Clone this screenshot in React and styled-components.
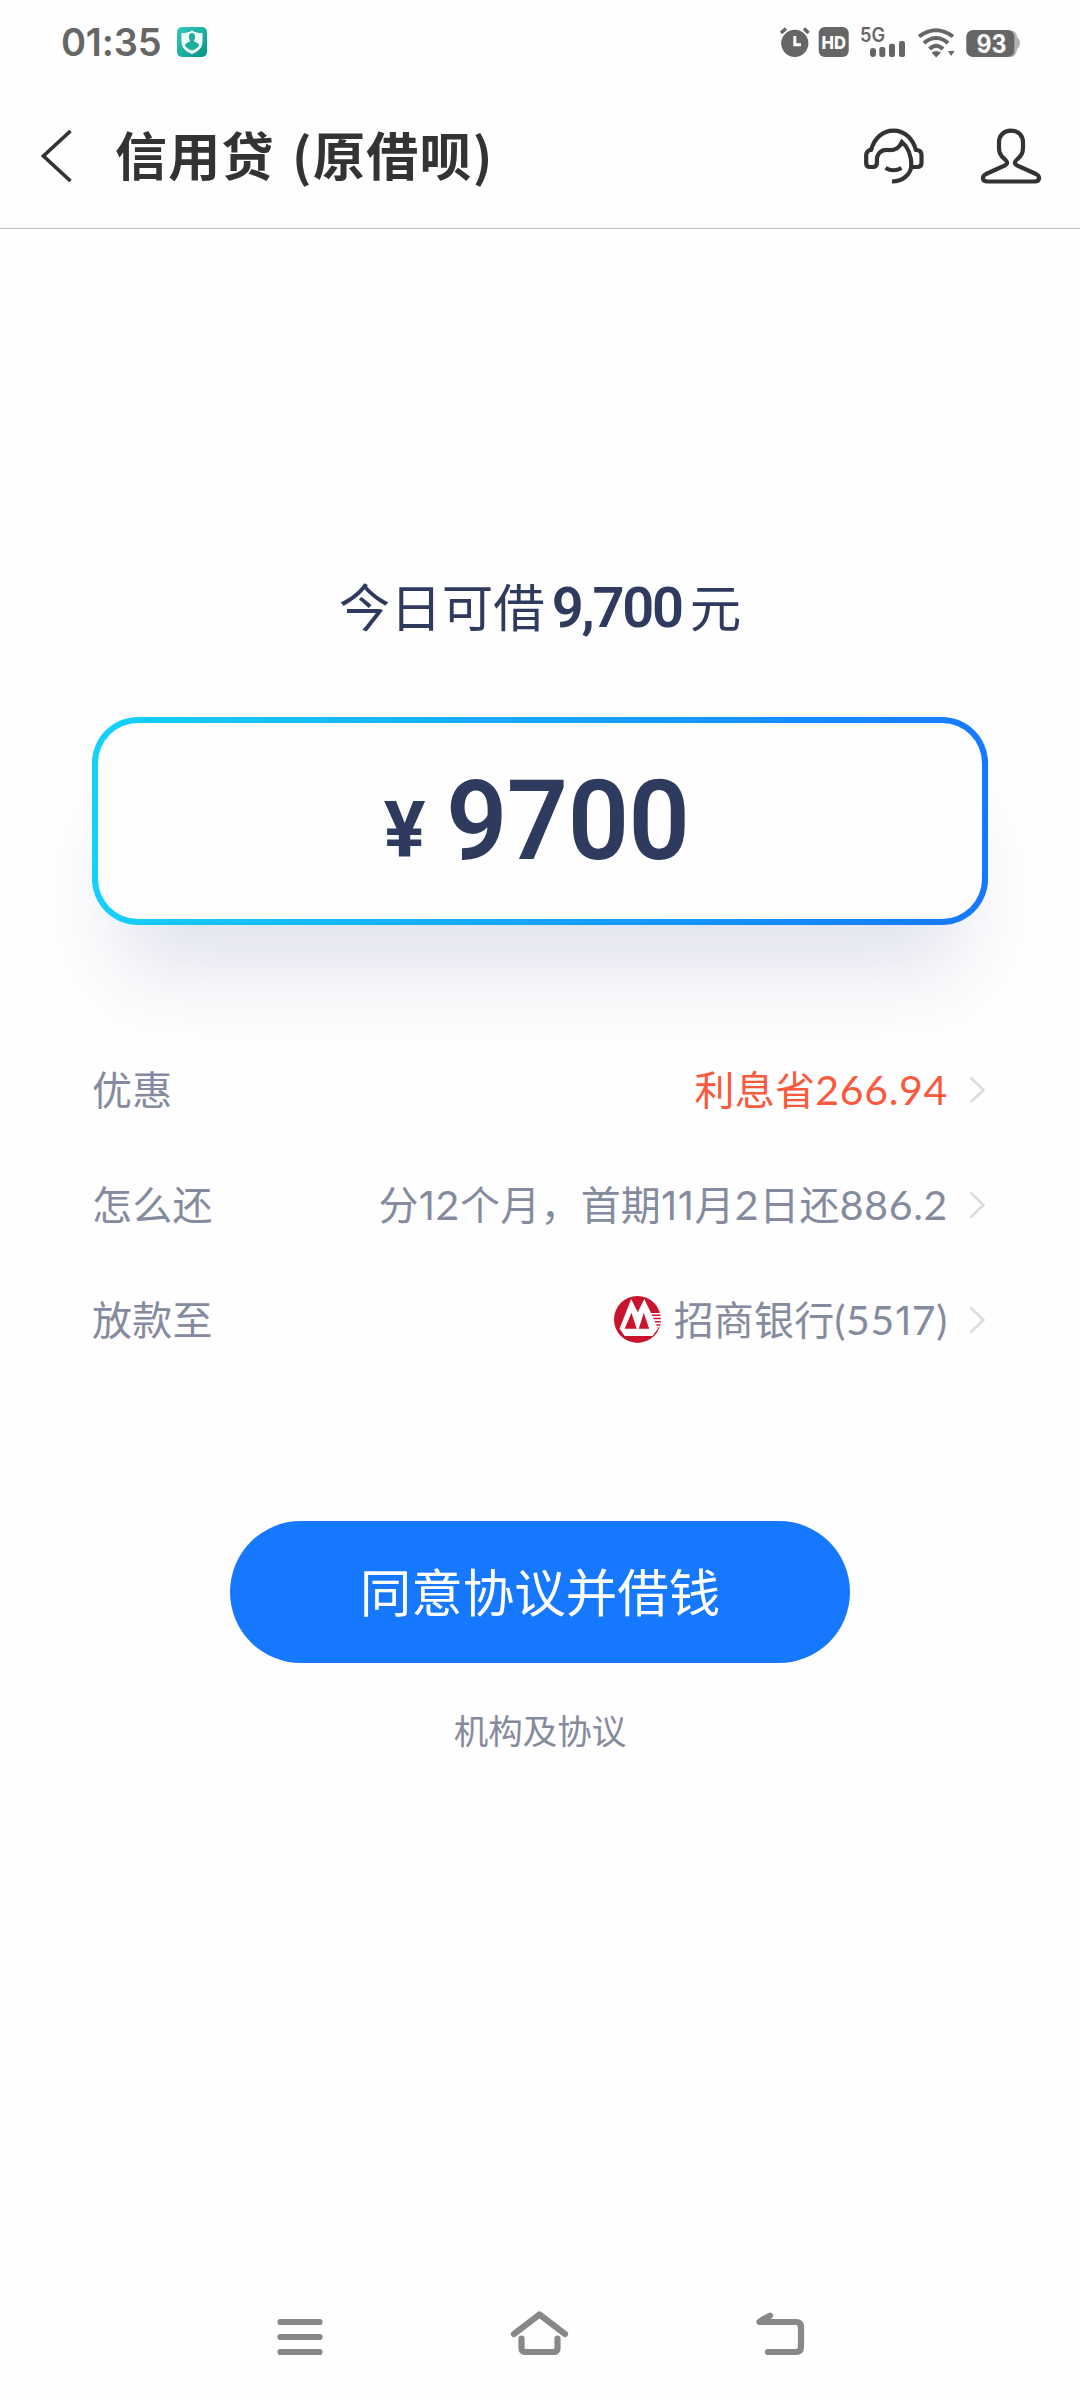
import styled, { createGlobalStyle } from "styled-components";

const rows = [
  {
    label: "优惠",
    accent: true,
    parts: [{ text: "利息省" }, { text: "266.94", num: true }],
  },
  {
    label: "怎么还",
    parts: [
      { text: "分" },
      { text: "1", num: true, narrow: true },
      { text: "2", num: true },
      { text: "个月，首期" },
      { text: "11", num: true, narrow: true },
      { text: "月" },
      { text: "2", num: true },
      { text: "日还" },
      { text: "886.2", num: true },
    ],
  },
  {
    label: "放款至",
    bank: true,
    parts: [
      { text: "招商银行" },
      { text: "(55", num: true },
      { text: "1", num: true, narrow: true },
      { text: "7)", num: true },
    ],
  },
];

export default function App() {
  return (
    <Page>
      <GlobalStyle />
      <StatusBar>
        <Clock>01:35</Clock>
        <ShieldIcon />
        <StatusIcons />
      </StatusBar>
      <Header>
        <BackIcon />
        <Title>信用贷 (原借呗)</Title>
        <HeadsetIcon />
        <PersonIcon />
      </Header>
      <Content>
        <Available>
          今日可借<strong>9,700</strong>元
        </Available>
        <AmountBox>
          <Currency>¥</Currency>
          <Amount>9700</Amount>
        </AmountBox>
        <List>
          {rows.map((row) => (
            <Row key={row.label}>
              <Label>{row.label}</Label>
              {row.bank && <BankLogo />}
              <Value $accent={row.accent}>
                {row.parts.map((part, i) =>
                  part.num ? (
                    <Num key={i} $narrow={part.narrow}>
                      {part.text}
                    </Num>
                  ) : (
                    <span key={i}>{part.text}</span>
                  )
                )}
              </Value>
              <ArrowIcon />
            </Row>
          ))}
        </List>
        <Submit>同意协议并借钱</Submit>
        <Agreement>机构及协议</Agreement>
      </Content>
      <NavBar>
        <svg width="46" height="44" viewBox="0 0 46 44">
          <path d="M3.5 7H42.5M3.5 22H42.5M3.5 37H42.5" />
        </svg>
        <svg width="60" height="44" viewBox="0 0 60 44">
          <path d="M5 19L30.500 -0.500L56 19M12.500 23.500V33Q12.500 37 16.500 37H44.500Q48.500 37 48.500 33V23.500" />
        </svg>
        <svg width="50" height="44" viewBox="0 0 50 44">
          <path d="M15 0.7L4.500 7H41Q46 7 46 12V32Q46 37 41 37H13" />
          <path d="M7 5L13 2V6Z" />
        </svg>
      </NavBar>
    </Page>
  );
}

function ShieldIcon() {
  return (
    <svg width="30" height="30" viewBox="0 0 30 30">
      <defs>
        <linearGradient id="shield" x1="0" y1="0" x2="1" y2="1">
          <stop offset="0" stopColor="#35c9bc" />
          <stop offset="1" stopColor="#079387" />
        </linearGradient>
      </defs>
      <rect width="30" height="30" rx="5" fill="url(#shield)" />
      <path
        d="M15 3.500C18 5.500 21 6 25.500 6V15C25.500 21 21 24.500 15 27C9 24.500 4.500 21 4.500 15V6C9 6 12 5.500 15 3.500Z"
        fill="#f2fffd"
      />
      <path
        d="M15 6C17.500 6 18.500 8.500 18 11C17.800 12.500 17 13.300 17 14.500C19.500 15.500 22.500 16.500 22 19C20 21.500 18 22.500 15 23.500C12 22.500 10 21.500 8 19C7.500 16.500 10.500 15.500 13 14.500C13 13.300 12.200 12.500 12 11C11.500 8.500 12.500 6 15 6Z"
        fill="#1fada1"
      />
    </svg>
  );
}

function StatusIcons() {
  return (
    <StatusSvg width="242" height="50" viewBox="0 -8 242 50">
      {/* alarm */}
      <circle cx="14.800" cy="18.300" r="13.600" />
      <path d="M1 8L6 3.500M24 3.500L28.500 8" stroke="#666" strokeWidth="3.500" />
      <path d="M14.800 11V19.700H21" fill="none" stroke="#fff" strokeWidth="3" />
      {/* HD */}
      <rect x="38.700" y="2" width="30" height="30" rx="6" />
      <text x="41.500" y="23.500" fontSize="18" fontWeight="800" fill="#fff" textLength="24.500" lengthAdjust="spacingAndGlyphs">
        HD
      </text>
      {/* mobile signal */}
      <text x="80" y="16.500" fontSize="19.500" fontWeight="600" textLength="25" lengthAdjust="spacingAndGlyphs">
        5G
      </text>
      <rect x="90" y="23" width="6" height="9" rx="3" />
      <rect x="99.300" y="22" width="6" height="10" rx="2" />
      <rect x="109" y="18.700" width="6" height="13.300" rx="2" />
      <rect x="119" y="16" width="6" height="16" rx="2" />
      {/* wifi */}
      <g fill="none" stroke="#666" strokeWidth="4">
        <path d="M139 11.500Q156 -1 173 11.500" />
        <path d="M144 18Q156 8 168 18" />
        <path d="M149.500 24Q156 17.500 163 24" />
      </g>
      <path d="M151.500 27.500Q156 24.500 161 27.500L156.200 32.500Z" />
      <path d="M168 26H174.500L171.200 31Z" />
      {/* battery */}
      <path d="M230 5.500C234 5.500 236.500 7 237 12Q240 14 240 18.500Q240 22 237 24.500C236.500 29.500 234 32 230 32Z" fill="#b3b3b3" />
      <rect x="186.300" y="5" width="48" height="27" rx="6.500" />
      <text x="196.500" y="27.500" fontSize="25" fontWeight="700" fill="#fff" textLength="30" lengthAdjust="spacingAndGlyphs">
        93
      </text>
    </StatusSvg>
  );
}

function BackIcon() {
  return (
    <svg width="32" height="52" viewBox="0 0 32 52">
      <path d="M29.500 1L2.500 26L29.500 51" fill="none" stroke="#333" strokeWidth="3.600" />
    </svg>
  );
}

function HeadsetIcon() {
  return (
    <LineIcon width="62" height="58" viewBox="0 0 62 58">
      <path d="M8 23.500C11 11 20 3.700 30.500 3.700C41 3.700 50 11 53 23.500" />
      <path d="M9.500 23H6.500Q3.200 25 3.200 28V36Q3.200 40 7 40H11Q14 39 14 35C13 27 18 22.500 25 23C32 23.500 36 21.500 39 15C45 20 48.500 28 48.500 40H54Q58.500 40 58.500 36V28Q58.500 23 53 23H51.500" />
      <path d="M48.500 38C48 47 40 54.500 29 54.500M22.500 41Q30.500 45.500 38.500 41" />
    </LineIcon>
  );
}

function PersonIcon() {
  return (
    <LineIcon width="62" height="58" viewBox="0 0 62 58">
      <path d="M31 3.700C23.500 3.700 19 8.500 19 15.500V21C19 26 20.500 29 24.500 32C28 35 28 36.500 25 38.500L6 47C1.500 49.500 2 54.500 7.500 54.500H54.500C60 54.500 60.500 49.500 56 47L37 38.500C34 36.500 34 35 37.500 32C41.500 29 43 26 43 21V15.500C43 8.500 38.500 3.700 31 3.700Z" />
    </LineIcon>
  );
}

function BankLogo() {
  return (
    <BankSvg width="47" height="47" viewBox="0 0 46.500 46.500">
      <circle cx="23.200" cy="23.200" r="23.200" fill="#c8152d" />
      <path d="M17 3L5.500 32.500L10.500 39.500H38L43.500 32.500L36.500 16.500L30 3L23.500 16Z" fill="#fff" />
      <path d="M10.500 32.500L17.300 16.500L22.500 32.500ZM24.500 32.500L29.500 16.500L34.800 32.500Z" fill="#c8152d" />
      <path d="M36 17.500H46M37 20.700H46.500M38 23.900H46.500M39 27.100H46M40 30.300H45" stroke="#fff" strokeWidth="1.600" />
    </BankSvg>
  );
}

function ArrowIcon() {
  return (
    <ArrowSvg width="17" height="28" viewBox="0 0 17 28">
      <path d="M1.500 1.500L14.500 14L1.500 26.500" fill="none" stroke="#dcdcdf" strokeWidth="2.600" />
    </ArrowSvg>
  );
}

const GlobalStyle = createGlobalStyle`
  body {
    margin: 0;
    background: #fefefe;
  }
`;

const Page = styled.div`
  box-sizing: border-box;
  width: 1080px;
  height: 2400px;
  overflow: hidden;

  display: flex;
  flex-direction: column;

  background: #fefefe;
  font-family: "Noto Sans CJK SC", sans-serif;
`;

const StatusBar = styled.div`
  height: 84px;
  box-sizing: border-box;
  padding: 0 58px 0 61px;

  display: flex;
  align-items: center;
`;

const Clock = styled.span`
  width: 116px;
  font-family: Inter, sans-serif;
  font-size: 38px;
  font-weight: 600;
  line-height: 84px;
  letter-spacing: -0.2px;
  color: #666;
`;

const StatusSvg = styled.svg`
  margin-left: auto;
  fill: #666;
  font-family: Inter, sans-serif;
`;

const Header = styled.header`
  height: 145px;
  box-sizing: border-box;
  padding: 0 38px 0 41px;
  border-bottom: 1px solid #bdbdbd;

  display: flex;
  align-items: center;
`;

const Title = styled.h1`
  flex: 1;
  margin: 0 0 0 42px;
  padding-bottom: 5px;
  font-size: 52px;
  font-weight: 700;
  line-height: 76px;
  letter-spacing: 1.3px;
  word-spacing: 4px;
  color: #333;
`;

const LineIcon = styled.svg`
  margin-left: 55px;
  fill: none;
  stroke: #333;
  stroke-width: 4.2;
`;

const Content = styled.main`
  flex: 1;
  padding: 330px 92px 0;

  display: flex;
  flex-direction: column;
  align-items: center;
`;

const Available = styled.p`
  height: 96px;
  margin: 0;
  font-size: 51.500px;
  line-height: 92px;
  color: #2f3a5f;
  white-space: nowrap;

  strong {
    margin: 0 8px 0 7px;
    font-family: Roboto, sans-serif;
    font-size: 56px;
    font-weight: 600;
    line-height: 1;
    letter-spacing: -2.2px;
  }
`;

const AmountBox = styled.div`
  box-sizing: border-box;
  width: 896px;
  height: 208px;
  margin-top: 62px;
  border: 6px solid transparent;
  border-radius: 46px;

  display: flex;
  justify-content: center;
  align-items: baseline;

  background: linear-gradient(#fefefe, #fefefe) padding-box,
    linear-gradient(95deg, #15d2fa, #1677ff) border-box;
  box-shadow: 0 74px 84px -32px rgba(50, 62, 140, 0.15);
  color: #2f3a5f;
  font-family: Roboto, sans-serif;
  line-height: 196px;
`;

const Currency = styled.span`
  margin-right: 20px;
  font-size: 78px;
  font-weight: 700;
  transform: translateY(-2px);
`;

const Amount = styled.span`
  margin-right: -3px;
  font-size: 112px;
  font-weight: 600;
  letter-spacing: -0.6px;
  transform: scaleX(0.96);
  transform-origin: left;
`;

const List = styled.div`
  width: 896px;
  margin-top: 107px;
`;

const Row = styled.div`
  height: 115px;
  display: flex;
  align-items: center;
  font-size: 40px;
  line-height: 60px;
  letter-spacing: 0.2px;
  color: #858b9f;
`;

const Label = styled.span`
  flex: 1;
  padding-bottom: 4px;
`;

const Value = styled.span`
  height: 60px;
  padding-bottom: 4px;
  white-space: nowrap;
  color: ${({ $accent }) => ($accent ? "#f9593d" : "inherit")};
`;

const Num = styled.span`
  font-family: ${({ $narrow }) => ($narrow ? "Inter" : "Lato")}, sans-serif;
  font-size: ${({ $narrow }) => ($narrow ? 39.5 : 41)}px;
  line-height: 1;
  letter-spacing: 0.7px;
`;

const BankSvg = styled.svg`
  margin-right: 13px;
`;

const ArrowSvg = styled.svg`
  margin: 0 2px 0 21px;
`;

const Submit = styled.button`
  width: 620px;
  height: 142px;
  margin-top: 144px;
  padding: 0 0 6px;
  border: none;
  border-radius: 71px;
  background: #1677ff;
  color: #fff;
  font-family: inherit;
  font-size: 51.500px;
`;

const Agreement = styled.a`
  margin-top: 41px;
  font-size: 34.500px;
  line-height: 50px;
  color: #858b9c;
`;

const NavBar = styled.nav`
  height: 126px;
  box-sizing: border-box;
  padding: 41px 275px 0 277px;

  display: flex;
  justify-content: space-between;

  svg {
    overflow: visible;
    fill: none;
    stroke: #888;
    stroke-width: 6.2;
    stroke-linecap: round;
    stroke-linejoin: round;
  }
`;
